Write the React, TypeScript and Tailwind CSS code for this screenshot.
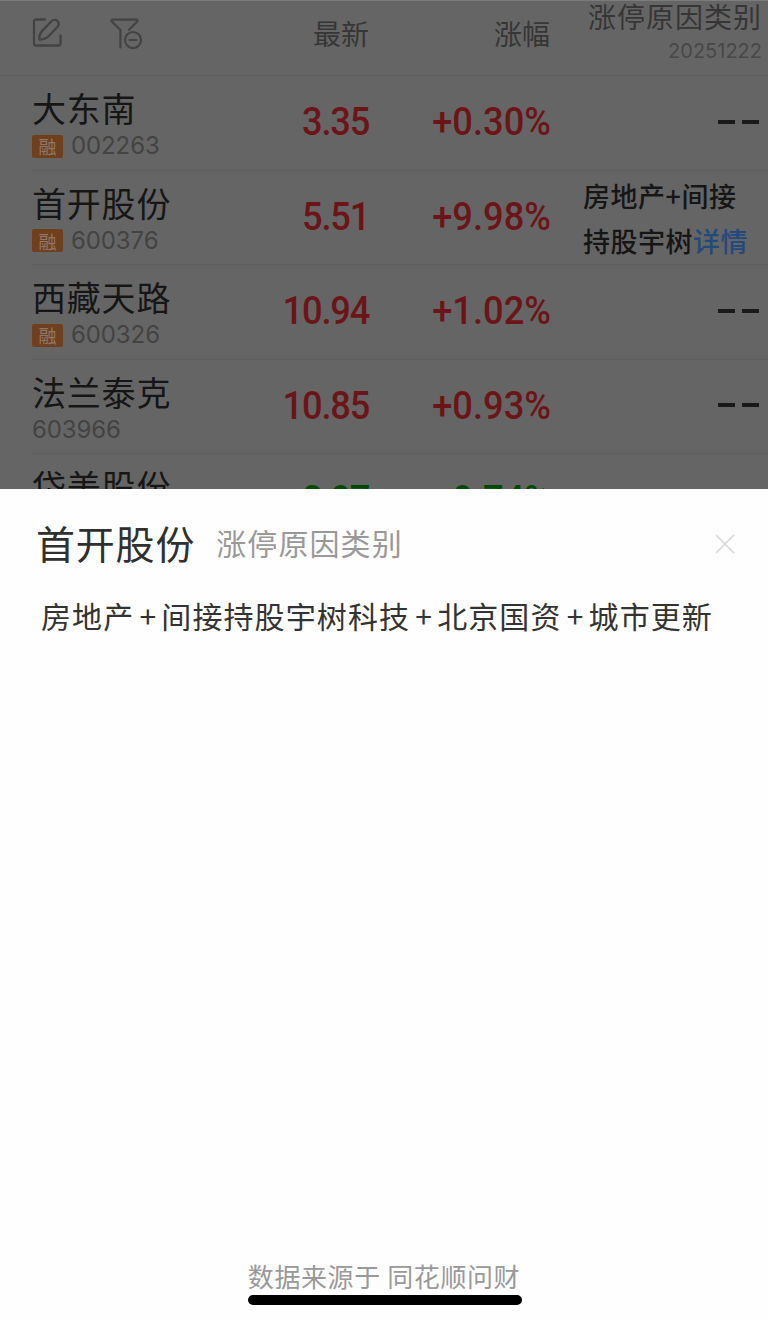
import React from 'react';

interface Stock {
  name: string;
  code: string;
  margin: boolean;
  price: string;
  change: string;
  reason?: string[];
}

const stocks: Stock[] = [
  { name: '大东南', code: '002263', margin: true, price: '3.35', change: '+0.30%' },
  { name: '首开股份', code: '600376', margin: true, price: '5.51', change: '+9.98%', reason: ['房地产+间接', '持股宇树'] },
  { name: '西藏天路', code: '600326', margin: true, price: '10.94', change: '+1.02%' },
  { name: '法兰泰克', code: '603966', margin: false, price: '10.85', change: '+0.93%' },
  { name: '岱美股份', code: '603730', margin: false, price: '8.07', change: '-0.74%' },
];

const reasons = ['房地产', '间接持股宇树科技', '北京国资', '城市更新'];

function EditIcon() {
  return (
    <svg width="30" height="30" viewBox="0 0 30 30" fill="none" stroke="#434343" strokeWidth="2.3" strokeLinecap="round" strokeLinejoin="round">
      <path d="M13 2.500H4a2 2 0 0 0-2 2v22a2 2 0 0 0 2 2h22.500a2 2 0 0 0 2-2V18.500" />
      <path d="M19.500 4.200c1.800-1.800 4.400-1.700 6-.2 1.700 1.600 1.600 4.200-.1 6L15.500 20.200c-1.900 1.600-5.300 2.600-8.300 2.400 0-2.900.9-6.300 2.500-8.200z" />
    </svg>
  );
}

function FilterIcon() {
  return (
    <svg width="33" height="32" viewBox="0 0 33 32" fill="none" stroke="#434343" strokeWidth="2.2" strokeLinecap="round" strokeLinejoin="round">
      <path d="M10.400 30.400V13L2 4.600C1.100 3.600 1.400 2.600 2.600 2.600h23.800c1.200 0 1.600 1 .8 2L18.900 12.800" />
      <circle cx="23" cy="23" r="8" />
      <path d="M19.600 23h6.800" />
    </svg>
  );
}

function StockRow({ stock }: { stock: Stock }) {
  const color = stock.change.startsWith('+') ? 'text-[#6b1518]' : 'text-[#034b05]';
  return (
    <div className="ml-8 flex h-[94.5px] shrink-0 border-b border-[#5f5f5f]">
      <div className="w-[180px] shrink-0 pt-[11px]">
        <div className="text-[34px] leading-[42px] tracking-[0.8px] whitespace-nowrap text-[#161616]">{stock.name}</div>
        <div className="flex h-[34px] items-center">
          {stock.margin && (
            <span className="mr-2 flex h-[23px] w-[31px] items-center justify-center rounded-[2px] bg-[#70401c] text-[18px] leading-none text-[#8d7869]">
              融
            </span>
          )}
          <span className="font-[Inter] text-[24px] leading-[32px] tracking-[-0.1px] text-[#434343]">{stock.code}</span>
        </div>
      </div>
      <div className={`w-[158px] shrink-0 origin-right scale-x-[0.93] pr-px text-right font-[Roboto] text-[39px] leading-[93px] font-medium tracking-[-1.3px] ${color}`}>
        {stock.price}
      </div>
      <div className={`w-[181px] shrink-0 origin-right scale-x-[0.93] text-right font-[Roboto] text-[39px] leading-[93px] font-medium ${color}`}>
        {stock.change}
      </div>
      {stock.reason ? (
        <div className="flex-1 pt-[2px] pl-8 text-[27px] leading-[45px] font-medium tracking-[0.5px] whitespace-nowrap text-[#161616]">
          <div>{stock.reason[0]}</div>
          <div>
            {stock.reason[1]}
            <span className="text-[#234a7c]">详情</span>
          </div>
        </div>
      ) : (
        <div className="flex flex-1 items-center justify-end gap-[7px] pr-[9px] pb-[2px]">
          <span className="h-[4px] w-[17px] bg-[#1a1a1a]" />
          <span className="h-[4px] w-[17px] bg-[#1a1a1a]" />
        </div>
      )}
    </div>
  );
}

export default function App() {
  return (
    <div className="flex h-[1320px] w-[768px] flex-col overflow-hidden bg-white font-['Noto_Sans_CJK_SC',sans-serif]">
      <div className="flex h-[489px] shrink-0 flex-col overflow-hidden border-t border-[#7c7c7c] bg-[#656565]">
        <div className="flex h-[75px] shrink-0 border-b border-[#5d5d5d] text-[28px] text-[#363636]">
          <div className="flex w-[212px] items-start gap-12 pt-4 pl-8">
            <EditIcon />
            <FilterIcon />
          </div>
          <div className="w-[158px] pr-px text-right leading-[64px]">最新</div>
          <div className="w-[181px] pr-px text-right leading-[64px]">涨幅</div>
          <div className="flex-1 pr-[6px] text-right whitespace-nowrap">
            <div className="text-[28px] leading-[30px] tracking-[1px]">涨停原因类别</div>
            <div className="font-[Inter] text-[20px] leading-[40px] text-[#484848]">20251222</div>
          </div>
        </div>
        {stocks.map(stock => (
          <StockRow key={stock.code} stock={stock} />
        ))}
      </div>

      <div className="flex flex-1 flex-col bg-[#fefefe]">
        <div className="flex h-[96px] items-center pt-[14px] pr-8 pl-9">
          <h2 className="pb-[3px] text-[39px] leading-none tracking-[0.8px] text-[#303030]">首开股份</h2>
          <span className="ml-[21px] pb-[5px] text-[30px] leading-none tracking-[1.1px] text-[#999999]">涨停原因类别</span>
          <button className="ml-auto">
            <svg width="22" height="22" viewBox="0 0 22 22" stroke="#d9d9d9" strokeWidth="1.7" strokeLinecap="round">
              <path d="M2.500 2.500l17 17M19.500 2.500l-17 17" />
            </svg>
          </button>
        </div>
        <p className="pt-[8px] pl-[41px] text-[30px] leading-[44px] tracking-[1.1px] whitespace-nowrap text-[#333333]">
          {reasons.map((reason, i) => (
            <React.Fragment key={reason}>
              {i > 0 && <span className="inline-block w-[27px] pl-px text-center">+</span>}
              {reason}
            </React.Fragment>
          ))}
        </p>
        <div className="mt-auto flex flex-col items-center pb-[15px]">
          <div className="text-[26px] leading-[38px] tracking-[0.6px] text-[#999999]">数据来源于 同花顺问财</div>
          <div className="ml-px h-[10px] w-[274px] rounded-full bg-black" />
        </div>
      </div>
    </div>
  );
}
